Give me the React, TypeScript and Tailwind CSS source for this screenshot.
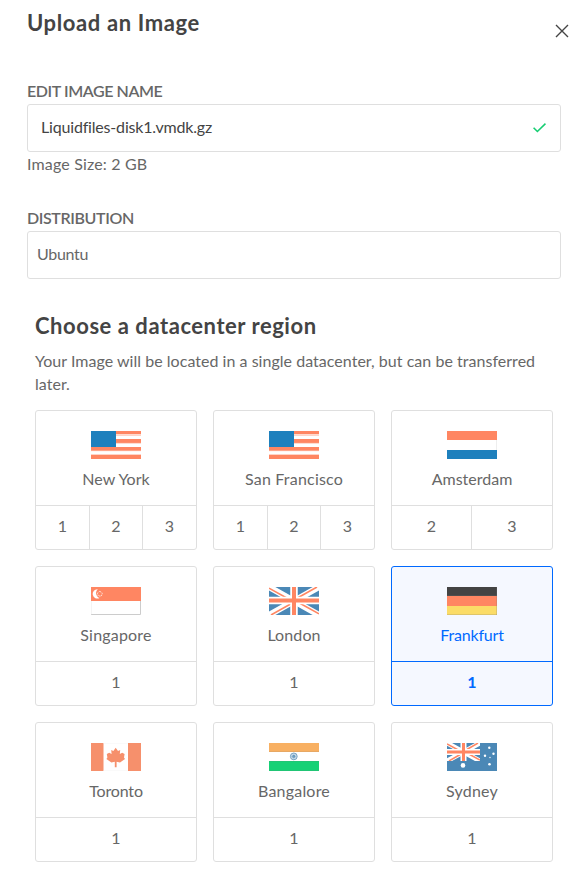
import type { ReactNode } from "react";

function Flag({ children }: { children: ReactNode }) {
  return (
    <svg width="50" height="28" viewBox="0 0 50 28" className="block shrink-0 overflow-hidden">
      {children}
    </svg>
  );
}

function UsaFlag() {
  return (
    <Flag>
      <rect width="50" height="28" fill="#fff" />
      {[0, 8, 16, 24].map((y) => (
        <rect key={y} y={y} width="50" height={y === 0 ? 3.3 : 4} fill="#ff8662" />
      ))}
      <path d="M0 4.5H50M0 12.3H50M0 19.7H50M0 23.5H50" stroke="#ffc0ad" strokeWidth="0.7" />
      <rect width="25" height="16" fill="#1e80bd" />
    </Flag>
  );
}

function NetherlandsFlag() {
  return (
    <Flag>
      <rect width="50" height="28" fill="#fff" />
      <rect width="50" height="9" fill="#ff8662" />
      <rect y="19" width="50" height="9" fill="#1e80bd" />
      <path d="M49.5 9V19" stroke="#eee" />
    </Flag>
  );
}

function SingaporeFlag() {
  return (
    <Flag>
      <rect width="50" height="28" fill="#fff" />
      <path d="M49.5 14V27.5H0" fill="none" stroke="#ccc" />
      <path d="M.2 14V28" stroke="#ddd" strokeWidth="0.5" />
      <rect width="50" height="14" fill="#ff8662" />
      <path d="M6.8 2.2A4.7 4.7 0 1 0 8.6 11A5.2 5.2 0 0 1 6.8 2.2Z" fill="#fff" />
      <path d="M8.8 4.3L11.3 6L10.4 9H7.3L6.4 6Z" fill="none" stroke="#ffe5dc" strokeWidth="0.9" strokeDasharray="1.6 .7" />
    </Flag>
  );
}

function UkFlag() {
  return (
    <Flag>
      <rect width="50" height="28" fill="#4b88b6" />
      <path d="M0 0L50 28M50 0L0 28" stroke="#fff" strokeWidth="6.2" />
      <path d="M0 1.2L20 12.3M50 26.8L30 15.7M48 0L28 11.2M2 28L22 16.8" stroke="#ff8662" strokeWidth="1.6" />
      <path d="M25 0V28M0 13.6H50" stroke="#fff" strokeWidth="7.5" />
      <path d="M25 0V28M0 13.6H50" stroke="#ff8662" strokeWidth="4" />
    </Flag>
  );
}

function GermanyFlag() {
  return (
    <Flag>
      <rect width="50" height="9" fill="#434343" />
      <rect y="9" width="50" height="10" fill="#ff8662" />
      <rect y="19" width="50" height="9" fill="#fbdc67" />
      <path d="M0 8.5H50M49.5 0V28M0 27.5H50" stroke="#777" strokeOpacity="0.22" />
    </Flag>
  );
}

function CanadaFlag() {
  return (
    <Flag>
      <rect width="50" height="28" fill="#fff" />
      <path d="M0 0H12.5V28H0ZM37 0H50V28H37Z" fill="#f6906c" />
      <path d="M12 .2H37M12 27.8H37" stroke="#eee" strokeWidth="0.4" />
      <path
        d="M24.7 4.8L27 8L29.2 7L28.8 11L31.2 9.7L33.6 11L33 14.5L34 16L29 19.5L25.6 18.8V24.3H23.8V18.8L20.4 19.5L15.4 16L16.4 14.5L15.8 11L18.2 9.7L20.6 11L20.2 7L22.4 8Z"
        fill="#f6906c"
      />
    </Flag>
  );
}

function IndiaFlag() {
  return (
    <Flag>
      <rect width="50" height="28" fill="#fff" />
      <rect width="50" height="9" fill="#f8b062" />
      <rect y="18" width="50" height="10" fill="#16d176" />
      <path d="M0 8.5H50M0 18.5H50M0 27.5H50" stroke="#777" strokeOpacity="0.12" />
      <circle cx="24.8" cy="13.4" r="3.4" fill="#d5e3ee" stroke="#7aa4c5" />
      <circle cx="24.8" cy="13.4" r="1.4" fill="#4b88b6" />
      <path d="M24.8 10.5V16.3M21.9 13.4H27.7M22.8 11.4L26.8 15.4M26.8 11.4L22.8 15.4" stroke="#7aa4c5" strokeWidth="0.5" />
    </Flag>
  );
}

function AustraliaFlag() {
  return (
    <Flag>
      <rect width="50" height="28" fill="#4b88b6" />
      <svg width="33" height="18" viewBox="0 0 33 18">
        <path d="M0 0L33 18M33 0L0 18" stroke="#fff" strokeWidth="4.8" />
        <path d="M0 1L13 8M33 17L20 10M31 0L19 7M2 18L14 11" stroke="#ff8662" strokeWidth="1.5" />
        <path d="M16.5 0V18M0 9H33" stroke="#fff" strokeWidth="6" />
        <path d="M16.5 0V18M0 9H33" stroke="#ff8662" strokeWidth="3" />
      </svg>
      <g fill="#fff">
        <circle cx="16" cy="22.4" r="2.3" />
        <circle cx="42.3" cy="4.7" r="1.2" />
        <circle cx="38" cy="12.8" r="1.2" />
        <circle cx="46.5" cy="10.8" r="1.2" />
        <circle cx="42.5" cy="21.3" r="1.3" />
        <circle cx="43" cy="14.5" r="0.7" />
      </g>
    </Flag>
  );
}

type Region = {
  name: string;
  slots: number[];
  flag: ReactNode;
  tracking: string;
  selected?: boolean;
};

const regions: Region[] = [
  { name: "New York", slots: [1, 2, 3], flag: <UsaFlag />, tracking: "tracking-[0px]" },
  { name: "San Francisco", slots: [1, 2, 3], flag: <UsaFlag />, tracking: "tracking-[0.2px]" },
  { name: "Amsterdam", slots: [2, 3], flag: <NetherlandsFlag />, tracking: "tracking-[0px]" },
  { name: "Singapore", slots: [1], flag: <SingaporeFlag />, tracking: "tracking-[0.2px]" },
  { name: "London", slots: [1], flag: <UkFlag />, tracking: "tracking-[0.1px]" },
  { name: "Frankfurt", slots: [1], flag: <GermanyFlag />, tracking: "tracking-[-0.2px]", selected: true },
  { name: "Toronto", slots: [1], flag: <CanadaFlag />, tracking: "tracking-[-0.15px]" },
  { name: "Bangalore", slots: [1], flag: <IndiaFlag />, tracking: "tracking-[0.2px]" },
  { name: "Sydney", slots: [1], flag: <AustraliaFlag />, tracking: "tracking-[0.2px]" },
];

const slotColumns: Record<number, string> = {
  1: "grid-cols-1",
  2: "grid-cols-2",
  3: "grid-cols-[54px_53px_53px]",
};

function RegionCard({ name, slots, flag, tracking, selected }: Region) {
  const line = selected ? "border-[#0069ff]" : "border-[#dfdfdf]";
  return (
    <div
      className={`flex h-[140px] flex-col rounded-[3px] border ${line} ${
        selected ? "bg-[#f5f8ff] text-[#0069ff]" : "text-[#676767]"
      }`}
    >
      <div className="flex h-[94px] flex-col items-center pt-5">
        {flag}
        <span className={`mt-2 leading-6 ${tracking}`}>{name}</span>
      </div>
      <div className={`grid flex-1 border-t ${line} ${slotColumns[slots.length]}`}>
        {slots.map((slot) => (
          <button
            key={slot}
            className={`border-r pb-[3px] last:border-r-0 ${line} ${selected ? "font-bold" : ""}`}
          >
            {slot}
          </button>
        ))}
      </div>
    </div>
  );
}

export default function App() {
  return (
    <main className="h-[878px] w-[585px] overflow-hidden bg-white pl-[27px] font-['Lato','Liberation_Sans',sans-serif] text-base text-[#676767]">
      <header className="flex h-[81px] items-start justify-between pr-[17px]">
        <h1 className="pt-[7px] text-[22px] leading-8 font-bold tracking-[0.62px] whitespace-nowrap text-[#444]">
          Upload an Image
        </h1>
        <button aria-label="Close" className="mt-[25px]">
          <svg width="12" height="12" viewBox="0 0 12 12" stroke="#444" strokeWidth="1.4" className="overflow-visible">
            <path d="M0 0L12 12M12 0L0 12" />
          </svg>
        </button>
      </header>

      <section className="w-[534px]">
        <h2 className="h-[23px] leading-5 font-semibold tracking-[-0.42px] whitespace-nowrap">
          EDIT IMAGE NAME
        </h2>
        <div className="flex h-12 items-center justify-between rounded-[3px] border border-[#dfdfdf] px-[14px] text-[#444]">
          <span className="-ml-px pb-0.5 tracking-[-0.18px]">Liquidfiles-disk1.vmdk.gz</span>
          <svg width="13" height="10" viewBox="0 0 13 10" fill="none" stroke="#15cd72" strokeWidth="1.6">
            <path d="M.6 4.8L4.4 8.5L12.5 .7" />
          </svg>
        </div>
        <p className="h-14 leading-6 tracking-[0.16px] whitespace-nowrap">Image Size: 2 GB</p>
        <h2 className="h-[23px] leading-5 font-semibold tracking-[-0.38px]">DISTRIBUTION</h2>
        <div className="flex h-12 items-center rounded-[3px] border border-[#dfdfdf] pl-[9px]">
          <span className="pb-0.5 tracking-[-0.3px]">Ubuntu</span>
        </div>
      </section>

      <section className="w-[526px] pt-[31px] pl-2">
        <h2 className="h-[39px] text-[22px] leading-8 font-bold tracking-[0.54px] whitespace-nowrap text-[#444]">
          Choose a datacenter region
        </h2>
        <p className="h-[61px] leading-[23px] tracking-[0.03px] whitespace-nowrap">
          Your Image will be located in a single datacenter, but can be transferred
          <br />
          later.
        </p>
        <div className="grid grid-cols-3 gap-4">
          {regions.map((region) => (
            <RegionCard key={region.name} {...region} />
          ))}
        </div>
      </section>
    </main>
  );
}
